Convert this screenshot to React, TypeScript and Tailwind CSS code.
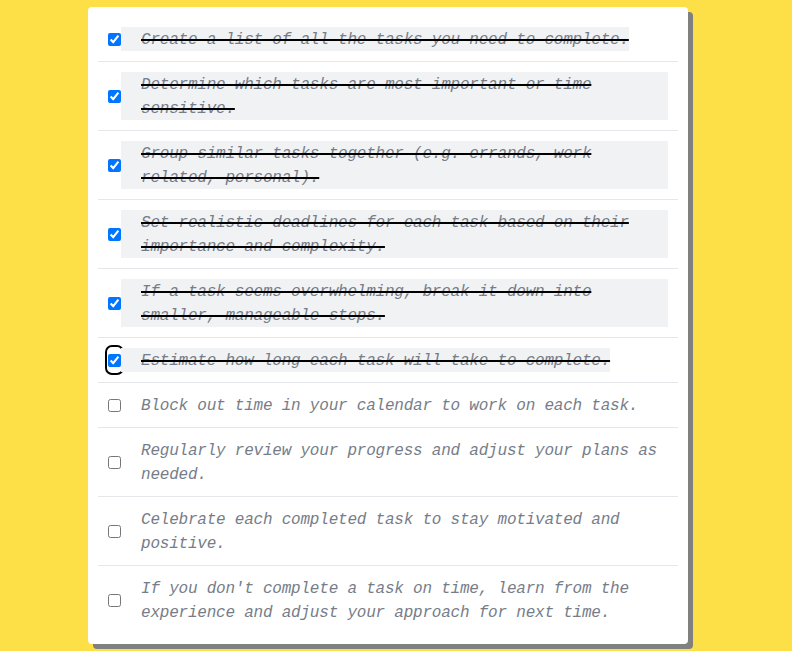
import { useState } from 'react'

const TASKS = [
  'Create a list of all the tasks you need to complete.',
  'Determine which tasks are most important or time sensitive.',
  'Group similar tasks together (e.g. errands, work related, personal).',
  'Set realistic deadlines for each task based on their importance and complexity.',
  'If a task seems overwhelming, break it down into smaller, manageable steps.',
  'Estimate how long each task will take to complete.',
  'Block out time in your calendar to work on each task.',
  'Regularly review your progress and adjust your plans as needed.',
  'Celebrate each completed task to stay motivated and positive.',
  "If you don't complete a task on time, learn from the experience and adjust your approach for next time.",
]

export default function App() {
  const [done, setDone] = useState<boolean[]>(TASKS.map((_, i) => i < 6))
  const focused = 5

  const toggle = (i: number) => setDone(d => d.map((v, j) => (j === i ? !v : v)))

  return (
    <div className="min-h-screen bg-[#fde047] flex justify-center pr-4 pt-[7px] pb-[7px]">
      <div className="w-[600px] bg-white rounded-sm px-[10px] py-[10px] shadow-[5px_5px_0_0_#808080]">
        {TASKS.map((task, i) => (
          <div
            key={task}
            className={`flex items-center px-[10px] py-[10px] ${i < TASKS.length - 1 ? 'border-b border-[#e5e7eb]' : ''}`}
          >
            <span
              className={`flex items-center self-stretch shrink-0 w-[13px] ${i === focused ? 'rounded-[4px] outline-2 outline-offset-1 outline-black' : ''}`}
            >
              <input
                type="checkbox"
                checked={done[i]}
                onChange={() => toggle(i)}
                className="w-[13px] h-[13px] m-0"
              />
            </span>
            <span
              className={`pl-5 text-base leading-6 italic tracking-[-0.22px] text-[#767d88] ${done[i] ? 'bg-[#f1f2f4]' : ''}`}
              style={{ fontFamily: '"Liberation Mono", "DejaVu Sans Mono", monospace' }}
            >
              <span className={`relative top-[1px] ${done[i] ? 'line-through decoration-black decoration-2' : ''}`}>{task}</span>
            </span>
          </div>
        ))}
      </div>
    </div>
  )
}
